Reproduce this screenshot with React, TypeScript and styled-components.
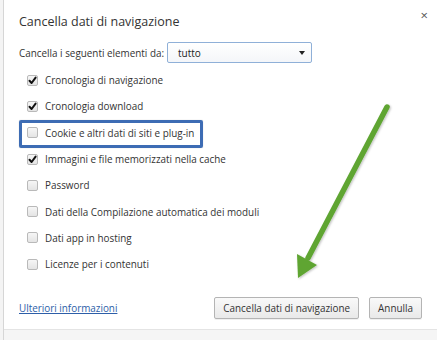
import React from 'react';
import styled, { createGlobalStyle } from 'styled-components';

const GlobalStyle = createGlobalStyle`
  html, body {
    margin: 0;
    padding: 0;
    background: #fff;
  }
`;

const Page = styled.div`
  position: relative;
  width: 437px;
  height: 340px;
  overflow: hidden;
  background: #f4f4f4;
  padding-left: 3px;
  box-sizing: border-box;
  font-family: "Open Sans", "Noto Sans", sans-serif;
  color: #333;
`;

const Dialog = styled.div`
  height: 100%;
  background: #fff;
  border-left: 1px solid #d6d6d6;
  display: flex;
  flex-direction: column;
  box-sizing: border-box;
`;

const Header = styled.div`
  display: flex;
  justify-content: space-between;
  align-items: center;
  padding: 10px 9px 0 15px;
  height: 22px;
`;

const Title = styled.h1`
  margin: 0;
  font-size: 12.5px;
  font-weight: 400;
  color: #333;
`;

const Close = styled.span`
  font-size: 13px;
  color: #555;
  line-height: 1;
  margin-top: -12px;
`;

const Body = styled.div`
  padding: 10px 0 0 15px;
  display: flex;
  flex-direction: column;
`;

const SelectRow = styled.div`
  display: flex;
  align-items: center;
  gap: 3px;
  height: 21px;
  font-size: 9.9px;
  margin-bottom: 4px;
`;

const Select = styled.div`
  width: 145px;
  height: 21px;
  box-sizing: border-box;
  border: 1px solid #8fb0d8;
  border-radius: 2px;
  background: linear-gradient(#fff, #f4f6f9);
  display: flex;
  align-items: center;
  justify-content: space-between;
  padding: 0 6px 0 10px;
  font-size: 10px;
  color: #222;
`;

const Caret = styled.span`
  width: 0;
  height: 0;
  border-left: 3.5px solid transparent;
  border-right: 3.5px solid transparent;
  border-top: 4px solid #222;
`;

const Row = styled.label`
  position: relative;
  display: flex;
  align-items: center;
  gap: 7px;
  height: 26.3px;
  padding-left: 8px;
  font-size: 9.9px;
  color: #333;
`;

const Highlight = styled.span`
  position: absolute;
  left: 0;
  top: 0;
  width: 184px;
  height: 28px;
  box-sizing: border-box;
  border: 3px solid #3d6cb4;
  border-radius: 2px;
  box-shadow: 0 0 1px rgba(0, 0, 0, 0.3);
`;

const Box = styled.span`
  width: 11px;
  height: 11px;
  box-sizing: border-box;
  border: 1px solid #b9b9b9;
  border-radius: 2px;
  background: linear-gradient(#f6f6f6, #e4e4e4);
  display: flex;
  align-items: center;
  justify-content: center;
`;

const Footer = styled.div`
  margin-top: auto;
  display: flex;
  align-items: center;
  padding: 0 15px 0 15px;
  height: 28px;
  margin-bottom: 7px;
`;

const Link = styled.a`
  font-size: 9.9px;
  color: #2d5ea8;
  text-decoration: underline;
  margin-right: auto;
`;

const Button = styled.button`
  height: 22px;
  padding: 0 8px;
  margin-left: 10px;
  font-family: inherit;
  font-size: 9.9px;
  color: #333;
  border: 1px solid #b4b4b4;
  border-radius: 2px;
  background: linear-gradient(#f9f9f9, #e9e9e9);
  box-shadow: 0 1px 0 rgba(0, 0, 0, 0.06);
`;

const BottomBar = styled.div`
  height: 10px;
  border-top: 1px solid #e4e4e4;
  background: #f5f5f5;
`;

const ArrowLayer = styled.svg`
  position: absolute;
  left: 0;
  top: 0;
  pointer-events: none;
`;

const Check = () => (
  <svg width="9" height="9" viewBox="0 0 9 9">
    <path d="M1.5 4.8 L3.6 7 L7.6 1.6" fill="none" stroke="#111" strokeWidth="2" strokeLinecap="round" strokeLinejoin="round" />
  </svg>
);

const items = [
  { label: 'Cronologia di navigazione', checked: true },
  { label: 'Cronologia download', checked: true },
  { label: 'Cookie e altri dati di siti e plug-in', checked: false, highlight: true },
  { label: 'Immagini e file memorizzati nella cache', checked: true },
  { label: 'Password', checked: false },
  { label: 'Dati della Compilazione automatica dei moduli', checked: false },
  { label: 'Dati app in hosting', checked: false },
  { label: 'Licenze per i contenuti', checked: false },
];

export default function App() {
  return (
    <>
      <GlobalStyle />
      <Page>
        <Dialog>
          <Header>
            <Title>Cancella dati di navigazione</Title>
            <Close>×</Close>
          </Header>
          <Body>
            <SelectRow>
              <span>Cancella i seguenti elementi da:</span>
              <Select>
                <span>tutto</span>
                <Caret />
              </Select>
            </SelectRow>
            {items.map(it => (
              <Row key={it.label}>
                {it.highlight && <Highlight />}
                <Box>{it.checked && <Check />}</Box>
                <span>{it.label}</span>
              </Row>
            ))}
          </Body>
          <Footer>
            <Link href="#">Ulteriori informazioni</Link>
            <Button>Cancella dati di navigazione</Button>
            <Button>Annulla</Button>
          </Footer>
          <BottomBar />
        </Dialog>
        <ArrowLayer width="437" height="340" viewBox="0 0 437 340">
          <defs>
            <filter id="sh" x="-20%" y="-20%" width="140%" height="140%">
              <feDropShadow dx="1" dy="1" stdDeviation="1.2" floodColor="#000" floodOpacity="0.25" />
            </filter>
          </defs>
          <g filter="url(#sh)">
            <line x1="387" y1="107" x2="308" y2="258" stroke="#5fa532" strokeWidth="5.5" strokeLinecap="round" />
            <polygon points="298,278 297,254 317,265" fill="#5fa532" />
          </g>
        </ArrowLayer>
      </Page>
    </>
  );
}
